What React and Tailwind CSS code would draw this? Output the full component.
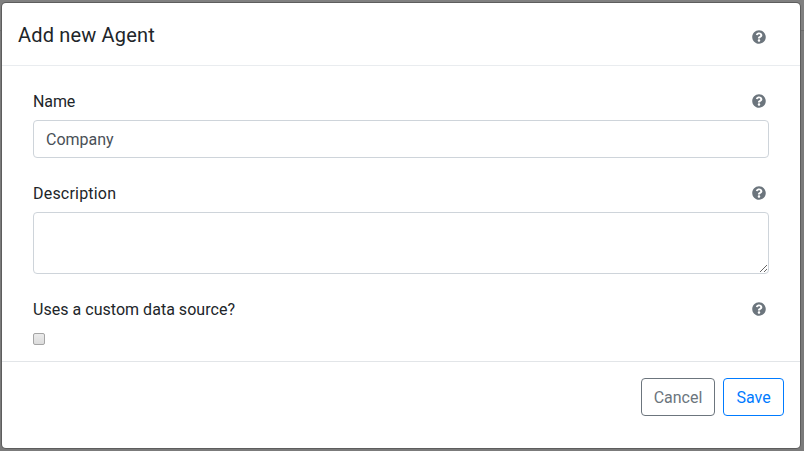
import { FaQuestionCircle } from "react-icons/fa";

function Help({ className = "" }) {
  return <FaQuestionCircle className={`size-[14px] shrink-0 text-[#6c757d] ${className}`} />;
}

function Label({ children, className = "" }) {
  return (
    <div className="flex h-6 items-center justify-between pr-[3px]">
      <span className={`pt-[2px] text-base leading-6 ${className}`}>{children}</span>
      <Help />
    </div>
  );
}

export default function App() {
  return (
    <div className="h-[451px] w-[804px] overflow-hidden bg-[linear-gradient(to_bottom,#808080_30px,#6c6c6c_30px,#6c6c6c_31px,#7b7b7b_31px)] pl-[2px] pt-[3px] font-['Roboto',sans-serif] text-[#212529]">
      <div className="flex h-[445px] w-[798px] flex-col rounded-[4px] bg-white shadow-[0_0_0_1px_#5d5d5d]">
        <header className="flex h-[63px] items-center justify-between border-b border-[#e9ecef] pl-4 pr-[34px]">
          <h1 className="pt-[2px] text-[20px] leading-[30px] tracking-[0.17px]">Add new Agent</h1>
          <Help className="mt-[6px]" />
        </header>

        <main className="flex h-[295px] flex-col px-[31px] pt-[23px]">
          <Label className="tracking-[-0.1px]">Name</Label>
          <input
            type="text"
            defaultValue="Company"
            className="mt-[7px] h-[38px] w-full rounded-[4px] border border-[#ced4da] bg-white px-3 text-base text-[#495057] outline-none"
          />
          <div className="mt-[23px]">
            <Label className="tracking-[0.2px]">Description</Label>
          </div>
          <textarea className="mt-[7px] h-[62px] w-full shrink-0 resize rounded-[4px] border border-[#ced4da] bg-white outline-none" />
          <div className="mt-[23px]">
            <Label className="tracking-[0.03px]">Uses a custom data source?</Label>
          </div>
          <input
            type="checkbox"
            className="mt-[12px] size-3 shrink-0 appearance-none rounded-[2px] border border-[#a5a5a5] bg-linear-to-b from-[#ebebeb] to-[#dcdcdc]"
          />
        </main>

        <footer className="flex justify-end gap-2 border-t border-[#e2e5e8] pr-4 pt-4">
          <button className="h-[38px] w-[74px] rounded-[4px] border border-[#6c757d] pt-[2px] text-base text-[#6c757d]">
            Cancel
          </button>
          <button className="h-[38px] w-[61px] rounded-[4px] border border-[#007bff] pt-[2px] text-base text-[#007bff]">
            Save
          </button>
        </footer>
      </div>
    </div>
  );
}
